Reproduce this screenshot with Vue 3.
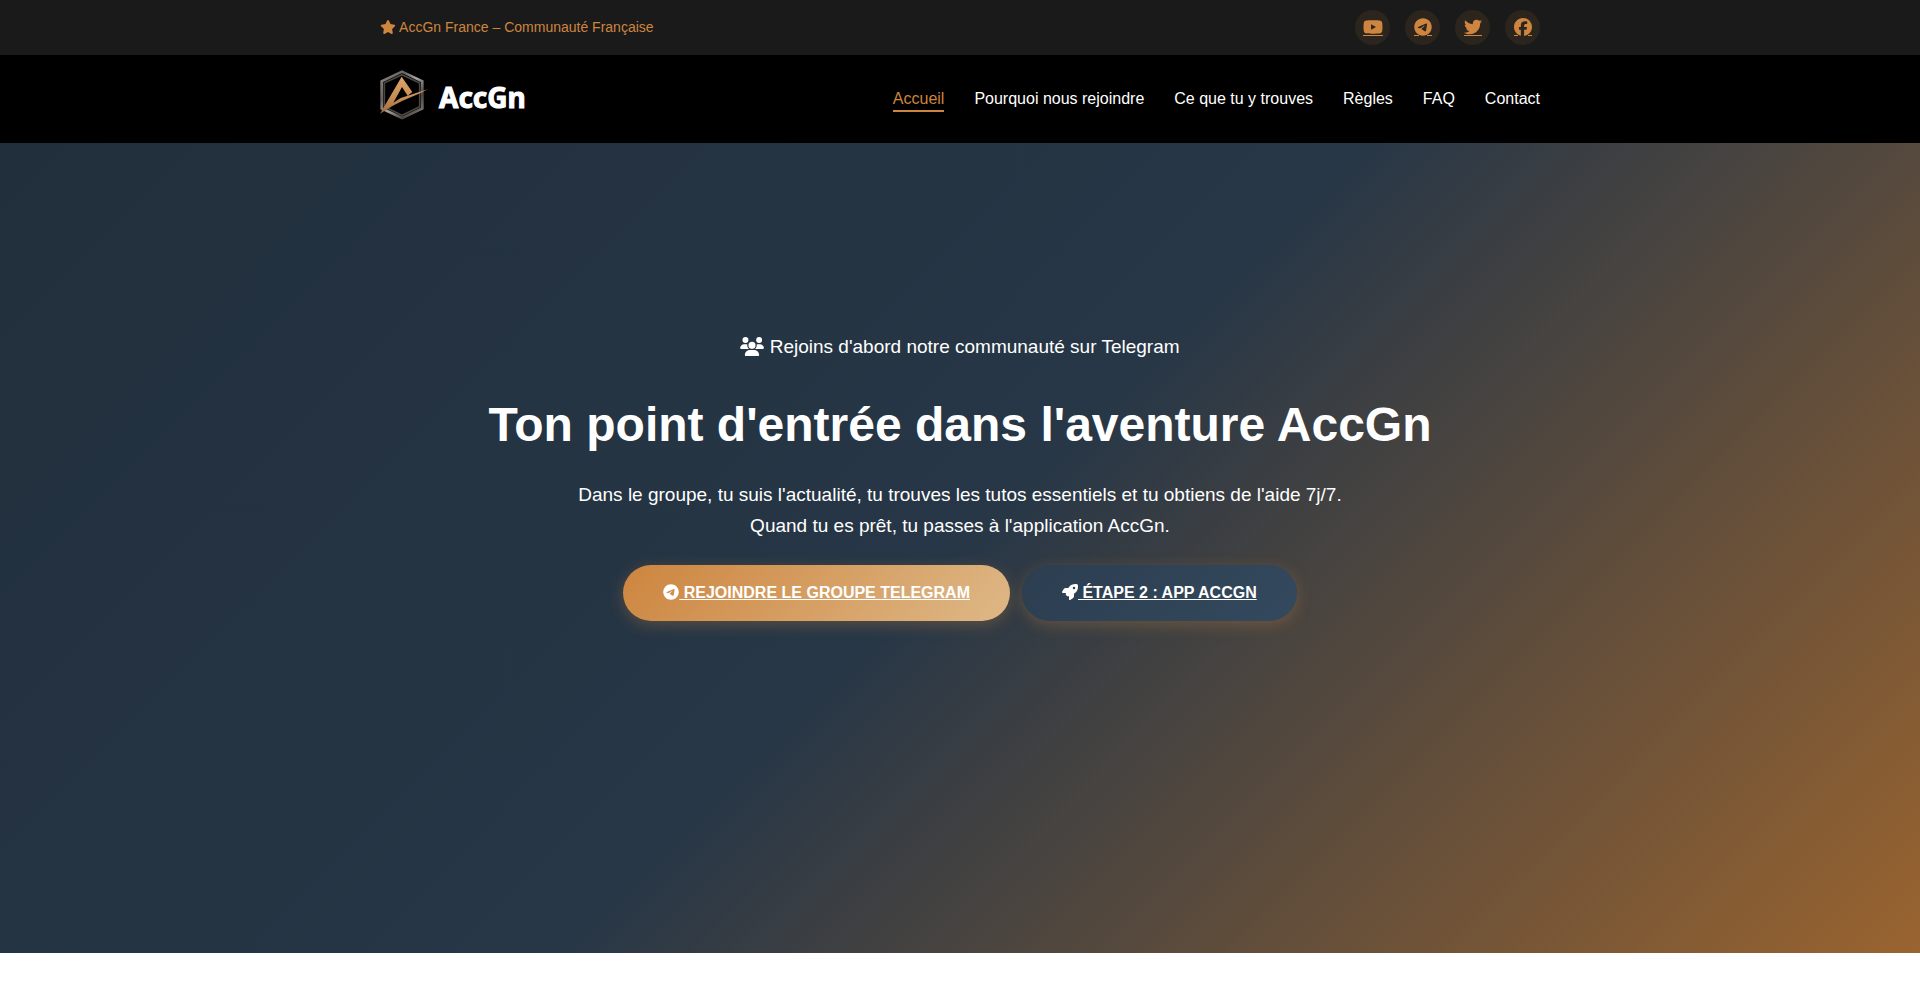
<template>
  <div class="page">
    <div class="top-bar">
      <div class="container bar-row">
        <div class="tagline">
          <svg class="icon-star" viewBox="0 0 576 512" aria-hidden="true">
            <path :d="icons.star" />
          </svg>
          AccGn France – Communauté Française
        </div>
        <div class="socials">
          <a
            v-for="social in socials"
            :key="social.name"
            class="social"
            href="#"
            :aria-label="social.name"
          >
            <svg class="social-icon" viewBox="0 0 22 20" aria-hidden="true">
              <svg
                :x="(22 - social.width) / 2"
                y="0"
                :width="social.width"
                height="18"
                :viewBox="social.box"
              >
                <path :d="social.path" />
              </svg>
              <path :d="social.line" />
            </svg>
          </a>
        </div>
      </div>
    </div>

    <header class="header">
      <div class="container bar-row">
        <a class="logo" href="#" aria-label="AccGn">
          <svg class="logo-mark" viewBox="0 0 144 150" aria-hidden="true">
            <defs>
              <linearGradient id="steel" x1="0" y1="0" x2="1" y2="1">
                <stop offset="0" stop-color="#8d8a86" />
                <stop offset="0.3" stop-color="#65625f" />
                <stop offset="0.5" stop-color="#a8a29b" />
                <stop offset="0.75" stop-color="#4a4744" />
                <stop offset="1" stop-color="#8d8a86" />
              </linearGradient>
              <linearGradient id="bronze" x1="0" y1="0" x2="0" y2="1">
                <stop offset="0" stop-color="#e0a56b" />
                <stop offset="0.6" stop-color="#c58a52" />
                <stop offset="1" stop-color="#a06a38" />
              </linearGradient>
            </defs>
            <path
              d="M66 5 L127 34 V115 L66 144 L5 115 V34 Z"
              fill="none"
              stroke="url(#steel)"
              stroke-width="8"
            />
            <path
              d="M66 14 L119 39 V110 L66 136 L13 110 V39 Z"
              fill="none"
              stroke="#4a4643"
              stroke-width="5"
            />
            <path
              d="M65 20 L97 66 L83 77 L66 51 L40 98 L62 84 L143 58 L120 70 L66 93 L36 109 L0 131 Z"
              fill="url(#bronze)"
            />
          </svg>
          <span class="logo-text">AccGn</span>
        </a>
        <nav class="nav">
          <a
            v-for="(link, index) in links"
            :key="link"
            href="#"
            :class="{ active: index === 0 }"
            >{{ link }}</a
          >
        </nav>
      </div>
    </header>

    <section class="hero">
      <div class="container">
        <p class="intro">
          <svg class="icon-users" viewBox="0 0 640 512" aria-hidden="true">
            <path :d="icons.users" />
          </svg>
          Rejoins d'abord notre communauté sur Telegram
        </p>
        <h1>Ton point d'entrée dans l'aventure AccGn</h1>
        <p class="text">
          Dans le groupe, tu suis l'actualité, tu trouves les tutos essentiels et tu obtiens de
          l'aide 7j/7.<br />
          Quand tu es prêt, tu passes à l'application AccGn.
        </p>
        <div class="actions">
          <a class="btn btn-primary" href="#"
            ><svg viewBox="0 0 496 512" aria-hidden="true"><path :d="icons.telegram" /></svg>
            Rejoindre le groupe Telegram</a
          >
          <a class="btn btn-secondary" href="#"
            ><svg viewBox="0 0 512 512" aria-hidden="true"><path :d="icons.rocket" /></svg>
            Étape 2 : App AccGn</a
          >
        </div>
      </div>
    </section>
  </div>
</template>

<script setup>
import { ref } from "vue";

const icons = {
  star: "M316.9 18C311.6 7 300.4 0 288.1 0s-23.4 7-28.8 18L195 150.3 51.4 171.5c-12 1.8-22 10.2-25.7 21.7s-.7 24.2 7.9 32.7L137.8 329 113.2 474.7c-2 12 3 24.2 12.9 31.3s23 8 33.8 2.3l128.3-68.5 128.3 68.5c10.8 5.7 23.9 4.9 33.8-2.3s14.9-19.3 12.9-31.3L438.5 329 542.7 225.9c8.6-8.5 11.7-21.2 7.9-32.7s-13.7-19.9-25.7-21.7L381.2 150.3 316.9 18z",
  users:
    "M144 0a80 80 0 1 1 0 160A80 80 0 1 1 144 0zM512 0a80 80 0 1 1 0 160A80 80 0 1 1 512 0zM0 298.7C0 239.8 47.8 192 106.7 192h42.7c15.9 0 31 3.5 44.6 9.7c-1.3 7.2-1.9 14.7-1.9 22.3c0 38.2 16.8 72.5 43.3 96c-.2 0-.4 0-.7 0H21.3C9.6 320 0 310.4 0 298.7zM405.3 320c-.2 0-.4 0-.7 0c26.6-23.5 43.3-57.8 43.3-96c0-7.6-.7-15-1.9-22.3c13.6-6.3 28.7-9.7 44.6-9.7h42.7C592.2 192 640 239.8 640 298.7c0 11.8-9.6 21.3-21.3 21.3H405.3zM224 224a96 96 0 1 1 192 0 96 96 0 1 1 -192 0zM128 485.3C128 411.7 187.7 352 261.3 352H378.7C452.3 352 512 411.7 512 485.3c0 14.7-11.9 26.7-26.7 26.7H154.7c-14.7 0-26.7-11.9-26.7-26.7z",
  telegram:
    "M248 8C111 8 0 119 0 256S111 504 248 504 496 393 496 256 385 8 248 8zM363 176.7c-3.7 39.2-19.9 134.4-28.1 178.3-3.5 18.6-10.3 24.8-16.9 25.4-14.4 1.3-25.3-9.5-39.3-18.7-21.8-14.3-34.2-23.2-55.3-37.2-24.5-16.1-8.6-25 5.3-39.5 3.7-3.8 67.1-61.5 68.3-66.7 .2-.7 .3-3.1-1.2-4.4s-3.6-.8-5.1-.5q-3.3 .7-104.6 69.1-14.8 10.2-26.9 9.9c-8.9-.2-25.9-5-38.6-9.1-15.5-5-27.9-7.7-26.8-16.3q.8-6.7 18.5-13.7 108.4-47.2 144.6-62.3c68.9-28.6 83.2-33.6 92.5-33.8 2.1 0 6.6 .5 9.6 2.9a10.5 10.5 0 0 1 3.5 6.7A43.8 43.8 0 0 1 363 176.7z",
  rocket:
    "M156.6 384.9L125.7 354c-8.5-8.5-11.5-20.8-7.7-32.2c3-8.9 7-20.5 11.8-33.8L24 288c-8.6 0-16.6-4.6-20.9-12.1s-4.2-16.7 .2-24.1l52.5-88.5c13-21.9 36.5-35.3 61.9-35.3l82.3 0c2.4-4 4.8-7.7 7.2-11.3C289.1-4.1 411.1-8.1 483.9 5.3c11.6 2.1 20.6 11.2 22.8 22.8c13.4 72.9 9.3 194.8-111.4 276.7c-3.5 2.4-7.3 4.8-11.3 7.2v82.3c0 25.4-13.4 49-35.3 61.9l-88.5 52.5c-7.4 4.4-16.6 4.5-24.1 .2s-12.1-12.2-12.1-20.9V380.8c-14.1 4.9-26.4 8.9-35.7 11.9c-11.2 3.6-23.4 .5-31.8-7.8zM384 168a40 40 0 1 0 0-80 40 40 0 1 0 0 80z",
};

// the underline below each icon stops where the glyph crosses it
const socials = ref([
  {
    name: "YouTube",
    box: "0 0 576 512",
    width: 20,
    path: "M549.7 124.1c-6.3-23.7-24.8-42.3-48.3-48.6C458.8 64 288 64 288 64S117.2 64 74.6 75.5c-23.5 6.3-42 24.9-48.3 48.6-11.4 42.9-11.4 132.3-11.4 132.3s0 89.4 11.4 132.3c6.3 23.7 24.8 41.5 48.3 47.8C117.2 448 288 448 288 448s170.8 0 213.4-11.5c23.5-6.3 42-24.2 48.3-47.8 11.4-42.9 11.4-132.3 11.4-132.3s0-89.4-11.4-132.3zM232.2 337.6V175.2l142.7 81.2-142.7 81.2z",
    line: "M1 17h20v1H1z",
  },
  {
    name: "Telegram",
    box: "0 0 496 512",
    width: 18,
    path: icons.telegram,
    line: "M2 17h5v1H2zM15 17h5v1h-5z",
  },
  {
    name: "Twitter",
    box: "0 0 512 512",
    width: 18,
    path: "M459.4 151.7c.3 4.5 .3 9.1 .3 13.6 0 138.7-105.6 298.6-298.6 298.6-59.5 0-114.7-17.2-161.1-47.1 8.4 1 16.6 1.3 25.3 1.3 49.1 0 94.2-16.6 130.3-44.8-46.1-1-84.8-31.2-98.1-72.8 6.5 1 13 1.6 19.8 1.6 9.4 0 18.8-1.3 27.6-3.6-48.1-9.7-84.1-52-84.1-103v-1.3c14 7.8 30.2 12.7 47.4 13.3-28.3-18.8-46.8-51-46.8-87.4 0-19.5 5.2-37.4 14.3-53 51.7 63.7 129.3 105.3 216.4 109.8-1.6-7.8-2.6-15.9-2.6-24 0-57.8 46.8-104.9 104.9-104.9 30.2 0 57.5 12.7 76.7 33.1 23.7-4.5 46.5-13.3 66.6-25.3-7.8 24.4-24.4 44.8-46.1 57.8 21.1-2.3 41.6-8.1 60.4-16.2-14.3 20.8-32.2 39.3-52.6 54.3z",
    line: "M2 17h18v1H2z",
  },
  {
    name: "Facebook",
    box: "0 0 512 512",
    width: 18,
    path: "M512 256C512 114.6 397.4 0 256 0S0 114.6 0 256C0 376 82.7 476.8 194.2 504.5V334.2H141.4V256h52.8V222.3c0-87.1 39.4-127.5 125-127.5c16.2 0 44.2 3.2 55.7 6.4V172c-6-.6-16.5-1-29.6-1c-42 0-58.2 15.9-58.2 57.2V256h83.6l-14.4 78.2H287V510.1C413.8 494.8 512 386.9 512 256z",
    line: "M2 17h4v1H2zM16 17h4v1h-4z",
  },
]);

const links = ref([
  "Accueil",
  "Pourquoi nous rejoindre",
  "Ce que tu y trouves",
  "Règles",
  "FAQ",
  "Contact",
]);
</script>

<style>
body {
  margin: 0;
  background: #fff;
}
</style>

<style scoped>
.page {
  font-family: "Liberation Sans", Arial, sans-serif;
  font-size: 16px;
  line-height: 26px;
  color: #fff;
}

.container {
  box-sizing: border-box;
  width: 100%;
  max-width: 1200px;
  margin: 0 auto;
  padding: 0 20px;
}

.bar-row {
  display: flex;
  justify-content: space-between;
  align-items: center;
}

svg {
  fill: currentColor;
}

.top-bar {
  padding: 10px 0;
  background: #1a1a1a;
  color: #cd853f;
}

.tagline {
  padding-bottom: 2px;
  font-size: 14px;
  line-height: 24px;
}

.icon-star {
  width: 16px;
  height: 14px;
  vertical-align: -2px;
}

.socials {
  display: flex;
  gap: 15px;
}

.social {
  display: flex;
  align-items: center;
  justify-content: center;
  width: 35px;
  height: 35px;
  border-radius: 50%;
  background: rgba(205, 133, 63, 0.1);
  color: #cd853f;
}

.social-icon {
  width: 22px;
  height: 20px;
}

.header {
  padding: 15px 0;
  background: #000;
}

.logo {
  display: flex;
  align-items: center;
  gap: 11px;
  height: 50px;
  margin-bottom: 8px;
  color: #fff;
  text-decoration: none;
}

.logo-mark {
  width: 48px;
  height: 50px;
}

.logo-text {
  padding-top: 3px;
  font-family: "Noto Sans", sans-serif;
  font-size: 28px;
  font-weight: bold;
  -webkit-text-stroke: 1px #fff;
}

.nav {
  display: flex;
  gap: 30px;
}

.nav a {
  padding-top: 2px;
  border-bottom: 2px solid transparent;
  color: #fff;
  line-height: 22px;
  text-decoration: none;
}

.nav a.active {
  border-color: #cd853f;
  color: #cd853f;
}

.hero {
  padding: 188px 0 332px;
  background:
    linear-gradient(rgba(0, 0, 0, 0.25), rgba(0, 0, 0, 0.25)),
    linear-gradient(135deg, #2c3e50 0%, #34495e 50%, #cd853f 100%);
  text-align: center;
}

.intro,
.text {
  margin: 0;
  font-size: 19px;
  line-height: 31px;
}

.icon-users {
  width: 24px;
  height: 19px;
  vertical-align: -3px;
}

h1 {
  margin: 34px 0 25px;
  font-size: 48px;
  line-height: 58px;
}

.actions {
  display: flex;
  justify-content: center;
  flex-wrap: wrap;
  gap: 12px;
  margin-top: 24px;
}

.btn {
  padding: 15px 40px;
  border-radius: 50px;
  box-shadow: 0 4px 15px rgba(205, 133, 63, 0.3);
  color: #fff;
  font-weight: bold;
  text-transform: uppercase;
}

.btn svg {
  width: 16px;
  height: 16px;
  vertical-align: -2px;
}

.btn-primary {
  background: linear-gradient(135deg, #cd853f, #deb887);
}

.btn-secondary {
  background: linear-gradient(135deg, #2c3e50, #34495e);
}
</style>
